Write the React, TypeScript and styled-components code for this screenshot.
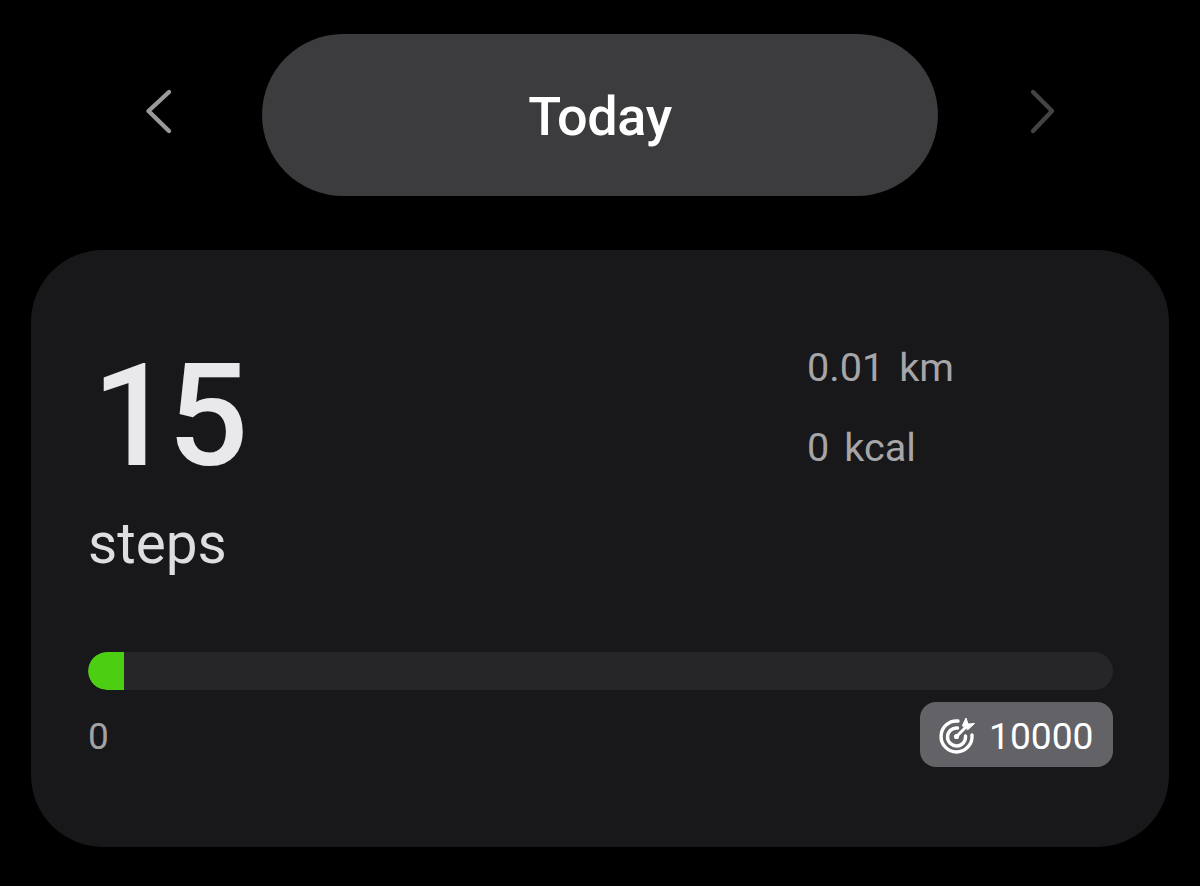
import React from "react";
import styled, { createGlobalStyle } from "styled-components";

const Global = createGlobalStyle`
  html, body { margin: 0; padding: 0; background: #000; }
  body { font-family: Roboto, "Liberation Sans", sans-serif; }
`;

const Page = styled.div`
  width: 1200px;
  height: 886px;
  background: #000;
  overflow: hidden;
  display: flex;
  flex-direction: column;
  align-items: center;
  padding-top: 34px;
  box-sizing: border-box;
`;

const Header = styled.header`
  display: flex;
  align-items: center;
  width: 1200px;
  height: 162px;
  padding-left: 144px;
  box-sizing: border-box;
`;

const Chevron = styled.svg<{ $dim?: boolean }>`
  width: 30px;
  height: 50px;
  flex: none;
  fill: none;
  stroke: ${(p) => (p.$dim ? "#434345" : "#9a9a9c")};
  stroke-width: 4.4;
  stroke-linecap: round;
  stroke-linejoin: round;
  margin-top: -8px;
`;

const Pill = styled.div`
  width: 676px;
  height: 162px;
  margin: 0 88px;
  border-radius: 81px;
  background: #3c3c3f;
  color: #fff;
  display: flex;
  align-items: center;
  justify-content: center;
  font-size: 54px;
  font-weight: 500;
  letter-spacing: -0.4px;
  padding-top: 3px;
  box-sizing: border-box;
  flex: none;
`;

const Card = styled.section`
  width: 1138px;
  height: 597px;
  margin-top: 54px;
  border-radius: 72px;
  background: #18181a;
  padding: 0 56px 0 57px;
  box-sizing: border-box;
  display: flex;
  flex-direction: column;
`;

const Stats = styled.div`
  display: flex;
  justify-content: space-between;
  height: 402px;
`;

const Main = styled.div`
  display: flex;
  flex-direction: column;
  padding-top: 87px;
`;

const Count = styled.div`
  font-size: 142px;
  line-height: 160px;
  color: #e9e9eb;
  font-weight: 500;
  letter-spacing: -5px;
  padding-left: 4px;
`;

const Unit = styled.div`
  font-size: 56.6px;
  line-height: 60px;
  color: #dedee0;
  margin-top: 17px;
`;

const Side = styled.div`
  display: flex;
  flex-direction: column;
  width: 306px;
  padding-top: 89px;
  gap: 22px;
`;

const SideRow = styled.div`
  display: flex;
  gap: 15px;
  font-size: 39.6px;
  line-height: 58px;
  color: #a6a6a9;
`;

const Track = styled.div`
  height: 38px;
  border-radius: 19px;
  background: #262628;
  overflow: hidden;
`;

const Fill = styled.div`
  height: 100%;
  background: #4cce13;
  border-radius: 19px 0 0 19px;
`;

const Footer = styled.div`
  display: flex;
  justify-content: space-between;
  align-items: center;
  margin-top: 12px;
`;

const Zero = styled.span`
  font-size: 37px;
  color: #a2a2a5;
  padding-top: 4px;
`;

const Badge = styled.div`
  width: 193px;
  height: 65px;
  border-radius: 16px;
  background: #636367;
  color: #fff;
  display: flex;
  align-items: center;
  gap: 13px;
  padding: 3px 0 0 18px;
  box-sizing: border-box;
  font-size: 37.2px;
`;

const TargetIcon = styled.svg`
  width: 38px;
  height: 38px;
  flex: none;
  fill: none;
  stroke: #fff;
  stroke-width: 3.4;
  stroke-linecap: round;
  margin-top: -3px;
`;

export default function App() {
  return (
    <Page>
      <Global />
      <Header>
        <Chevron viewBox="0 0 30 50" aria-label="Previous">
          <path d="M25 6 L4.5 25 L25 45" />
        </Chevron>
        <Pill>Today</Pill>
        <Chevron $dim viewBox="0 0 30 50" aria-label="Next">
          <path d="M7 6 L26 25 L7 45" />
        </Chevron>
      </Header>
      <Card>
        <Stats>
          <Main>
            <Count>15</Count>
            <Unit>steps</Unit>
          </Main>
          <Side>
            <SideRow>
              <span>0.01</span>
              <span>km</span>
            </SideRow>
            <SideRow>
              <span>0</span>
              <span>kcal</span>
            </SideRow>
          </Side>
        </Stats>
        <Track>
          <Fill style={{ width: `${(36 / 1025) * 100}%` }} />
        </Track>
        <Footer>
          <Zero>0</Zero>
          <Badge>
            <TargetIcon viewBox="0 0 38 38">
              <path d="M20 5 A15.5 15.5 0 1 0 34 19" />
              <path d="M19.5 12 A9 9 0 1 0 27.5 20" />
              <circle cx="18.5" cy="20.5" r="2.6" fill="#fff" stroke="none" />
              <path d="M18.5 20.5 L27 12" strokeWidth="3" />
              <path d="M24.5 9.5 L28 2 L30 8 L36.5 7.5 L30 13.5 Z" fill="#fff" strokeWidth="1" strokeLinejoin="round" />
            </TargetIcon>
            10000
          </Badge>
        </Footer>
      </Card>
    </Page>
  );
}
